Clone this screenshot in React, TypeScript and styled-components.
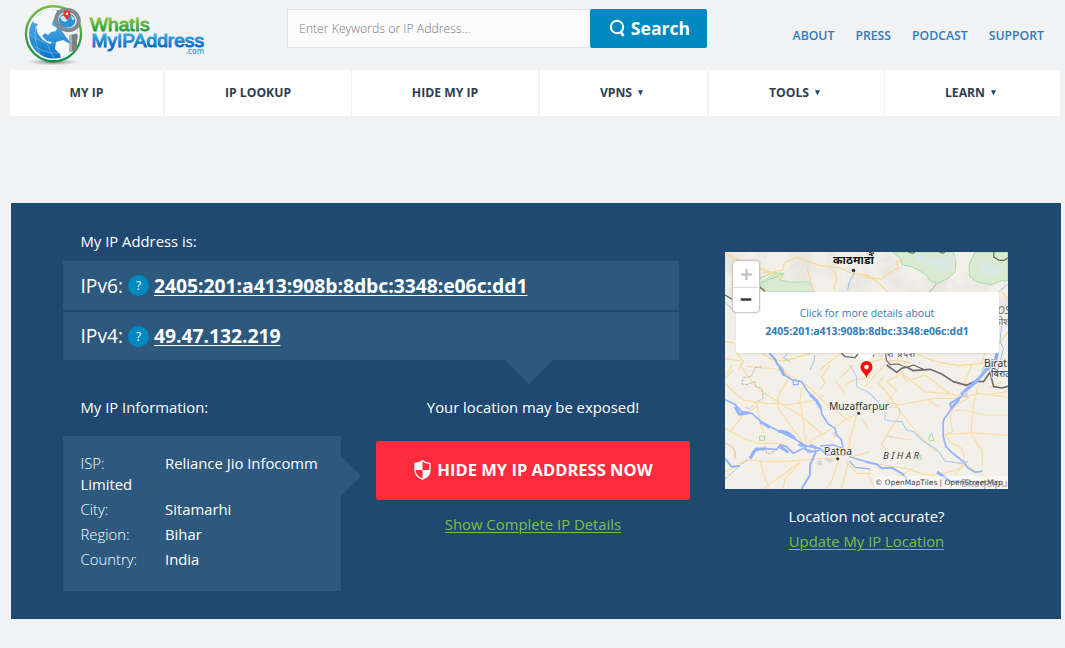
import React from 'react';
import styled, { createGlobalStyle } from 'styled-components';

const Global = createGlobalStyle`
  * { box-sizing: border-box; }
  body { margin: 0; background: #f1f2f4; font-family: 'Open Sans', 'Noto Sans', sans-serif; }
  a { color: inherit; }
`;

const Page = styled.div`
  width: 1065px;
  height: 648px;
  overflow: hidden;
`;
const Header = styled.header`
  display: flex;
  align-items: flex-start;
  height: 70px;
`;
const LogoLink = styled.div`
  width: 287px;
  height: 70px;
  svg { display: block; }
`;
const SearchForm = styled.form`
  display: flex;
  width: 420px;
  height: 39px;
  margin-top: 9px;
`;
const SearchInput = styled.input`
  flex: 1;
  min-width: 0;
  padding: 0 11px;
  border: 1px solid #e2e3e5;
  border-right: 0;
  background: #fcfcfc;
  font: 300 12.25px 'Open Sans', sans-serif;
  color: #777;
  outline: none;
  &::placeholder { color: #777; opacity: 1; }
`;
const SearchButton = styled.button`
  display: flex;
  align-items: center;
  justify-content: center;
  gap: 5px;
  width: 117px;
  border: 0;
  border-radius: 2px;
  padding: 0 0 1px 2px;
  background: #0088c1;
  color: #fff;
  font: 700 17.6px 'Open Sans', sans-serif;
`;
const TopLinks = styled.nav`
  display: flex;
  flex: 1;
  justify-content: flex-end;
  gap: 21px;
  padding: 27px 21px 0 0;
  font-size: 12.25px;
  font-weight: 600;
  line-height: 17px;
  color: #337ab7;
`;
const MainNav = styled.nav`
  display: grid;
  grid-template-columns: 155px 187px 188px 169px 176px 175px;
  width: 1050px;
  height: 46px;
  margin-left: 10px;
`;
const NavItem = styled.div<{ $gap: number; $menu?: boolean }>`
  display: flex;
  align-items: center;
  justify-content: center;
  gap: 6px;
  padding: 0 ${(p) => (p.$menu ? 4 : 0)}px 2px 0;
  background: #fff;
  border-right: ${(p) => p.$gap}px solid #f1f2f4;
  color: #2d3e50;
  font-size: 12.2px;
  font-weight: 700;
`;
const CaretSvg = styled.svg`
  display: block;
  margin-top: 2px;
`;
const Panel = styled.main`
  display: flex;
  width: 1050px;
  height: 416px;
  margin: 87px 0 0 11px;
  padding: 28px 0 0 52px;
  background: #1f4971;
  color: #fff;
  font-size: 14.85px;
`;
const Left = styled.section`
  width: 662px;
`;
const Label = styled.div`
  height: 30px;
  padding-left: 17.5px;
  line-height: 21px;
`;
const IpRow = styled.div<{ $h: number }>`
  display: flex;
  align-items: center;
  width: 616px;
  height: ${(p) => p.$h}px;
  margin-bottom: 2px;
  padding: 0 0 1px 17.5px;
  background: #2d597f;
  font-size: 19.2px;
`;
const IpName = styled.span`
  width: 47.5px;
  white-space: nowrap;
`;
const Help = styled.span`
  display: flex;
  align-items: center;
  justify-content: center;
  width: 21px;
  height: 21px;
  margin: 1px 5px 0 0;
  border-radius: 50%;
  background: #0088c1;
  font-size: 12px;
`;
const IpLink = styled.a`
  font-size: 19.4px;
  font-weight: 700;
  letter-spacing: -0.07px;
  text-decoration: underline;
  text-decoration-thickness: 1px;
  text-underline-offset: 2px;
`;
const DownArrow = styled.div`
  width: 0;
  margin: -2px 0 0 442px;
  border: 24px solid transparent;
  border-top-color: #2d597f;
  border-bottom: 0;
`;
const Lower = styled.div`
  display: flex;
  margin-top: 13px;
`;
const InfoColumn = styled.div`
  width: 313px;
`;
const InfoLabel = styled(Label)`
  height: 39px;
`;
const InfoWrap = styled.div`
  display: flex;
  align-items: flex-start;
`;
const InfoBox = styled.div`
  width: 278px;
  height: 155px;
  padding: 17px 17.5px 0;
  background: #2d597f;
`;
const RightArrow = styled.div`
  margin-top: 20px;
  border: 20px solid transparent;
  border-left-color: #2d597f;
  border-right: 0;
`;
const InfoLine = styled.div`
  margin-bottom: 4px;
  line-height: 21px;
`;
const InfoKey = styled.span`
  display: inline-block;
  width: 84.5px;
  height: 21px;
  vertical-align: top;
  font-weight: 300;
`;
const Cta = styled.div`
  display: flex;
  flex-direction: column;
  align-items: center;
  width: 314px;
  line-height: 21px;
`;
const CtaButton = styled.button`
  display: flex;
  align-items: center;
  justify-content: center;
  gap: 6px;
  width: 314px;
  height: 59px;
  margin: 23px 0 14px;
  padding: 0 0 2px 1px;
  border: 0;
  border-radius: 3px;
  background: #ff2a3b;
  color: #fff;
  font: 700 16.55px 'Open Sans', sans-serif;
`;
const GreenLink = styled.a`
  color: #7ac143;
  text-decoration: underline;
  text-underline-offset: 2px;
  text-decoration-thickness: 1px;
`;
const MapColumn = styled.aside`
  display: flex;
  flex-direction: column;
  align-items: center;
  width: 283px;
  padding-top: 21px;
  line-height: 25px;
`;
const MapFrame = styled.div`
  position: relative;
  width: 283px;
  height: 237px;
  margin-bottom: 15px;
  overflow: hidden;
  > svg { display: block; }
`;
const Popup = styled.div`
  position: absolute;
  left: 10.5px;
  top: 40px;
  width: 263px;
  height: 61px;
  padding: 12px 0 0 0;
  border-radius: 3px;
  background: #fff;
  box-shadow: 0 1px 2px rgba(0, 0, 0, 0.1);
  color: #337ab7;
  font-size: 10.5px;
  line-height: 18px;
  text-align: center;
`;
const Zoom = styled.div`
  position: absolute;
  left: 7px;
  top: 8px;
  display: grid;
  grid-template-rows: 26px 25px;
  width: 28px;
  border: 1px solid #c9c9c7;
  border-radius: 4px;
  background: #fff;
  box-shadow: 0 0 0 1px rgba(0, 0, 0, 0.06);
  > svg { display: block; margin: auto; }
  > :last-child { width: 100%; border-top: 1px solid #ddd; }
`;
const Credit = styled.div`
  position: absolute;
  right: 0;
  bottom: 0;
  width: 134px;
  height: 13px;
  padding-left: 1px;
  background: rgba(255, 255, 255, 0.5);
  color: #444;
  font: 7.45px/13px 'DejaVu Sans', sans-serif;
`;

const Logo = () => (
  <svg width="220" height="70" viewBox="0 0 220 70">
    <defs>
      <linearGradient id="ring" x2="0" y2="1"><stop stopColor="#79bd3f" /><stop offset="1" stopColor="#079348" /></linearGradient>
      <linearGradient id="sea" x2="0" y2="1"><stop stopColor="#63bdf0" /><stop offset="1" stopColor="#0873c5" /></linearGradient>
      <linearGradient id="green" x2="0" y2="1"><stop offset=".2" stopColor="#87c540" /><stop offset=".8" stopColor="#229943" /></linearGradient>
      <linearGradient id="blue" x2="0" y2="1"><stop offset=".2" stopColor="#3caae4" /><stop offset=".8" stopColor="#0869c4" /></linearGradient>
      <radialGradient id="shade"><stop stopColor="#555" stopOpacity=".8" /><stop offset="1" stopColor="#888" stopOpacity="0" /></radialGradient>
      <clipPath id="globe"><circle cx="53.5" cy="34" r="24.5" /></clipPath>
    </defs>
    <ellipse cx="53" cy="62" rx="26" ry="3.5" fill="url(#shade)" />
    <circle cx="53.5" cy="33.8" r="27.5" fill="#fff" stroke="url(#ring)" strokeWidth="2.4" />
    <circle cx="53.5" cy="34" r="24.5" fill="url(#sea)" />
    <g clipPath="url(#globe)">
      <path fill="#f5f9fc" d="M33 20L38 15L46 10L56 9L58 17L53 20L52 25L57 28L56 31L51 32L48 35L45 33L42 36L47 41L52 42L50 44L43 40L38 34L36 27L38 24L34 23Z M56 42L63 40L72 45L78 50L70 60L62 62L60 54L55 49Z M53 14L66 10L80 30L72 45L66 37L60 28Z" />
      <path fill="none" stroke="#9bd0f0" strokeWidth=".5" d="M29 34Q42 44 55 43M30 44Q44 54 60 53M36 26Q32 40 43 60M47 41Q48 50 56 60" />
    </g>
    <path d="M69.5 35L77 33.5V50L69.5 52Z" fill="#7c8083" />
    <path d="M69.5 35L72 34.5V51.3L69.5 52Z" fill="#a9adaf" />
    <ellipse cx="67.5" cy="20" rx="11.5" ry="10" transform="rotate(20 67.5 20)" fill="#d5e9f4" stroke="#85898c" strokeWidth="4" />
    <ellipse cx="67" cy="20.5" rx="8.3" ry="7.3" fill="#2b93d2" />
    <path d="M60 17L65 15L68 19L66 22L62 21ZM71 15L75 19L72 20Z" fill="#cae5f3" />
    <path d="M67 20C65 17 63.4 16 63.4 13.8A3.6 3.6 0 0 1 70.6 13.8C70.6 16 68 18 67 20Z" fill="#e7312b" />
    <circle cx="67" cy="13.7" r="1.3" fill="#fff" />
    <text x="90" y="31.3" fontFamily="Liberation Sans, sans-serif" fontSize="19" fill="url(#green)" stroke="url(#green)" strokeWidth="1" textLength="59.5" lengthAdjust="spacingAndGlyphs">WhatIs</text>
    <text x="91.5" y="46.8" fontFamily="Liberation Sans, sans-serif" fontSize="18.5" fill="url(#blue)" stroke="url(#blue)" strokeWidth="1" textLength="112.5" lengthAdjust="spacingAndGlyphs">MyIPAddress</text>
    <text x="186" y="54" fontFamily="Open Sans, sans-serif" fontWeight="600" fontSize="8.5" fill="#3b95d3" textLength="18" lengthAdjust="spacingAndGlyphs">.com</text>
  </svg>
);

const SearchIcon = () => (
  <svg width="17" height="18" viewBox="0 0 17 18" fill="none" stroke="#fff">
    <circle cx="8" cy="8" r="6.2" strokeWidth="2" />
    <path d="M11.5 12.5L14.5 17" strokeWidth="2.6" />
  </svg>
);

const ShieldIcon = () => (
  <svg width="17" height="20" viewBox="0 0 17 20">
    <path d="M8.5 .8C6.5 2.5 4 3.2 1 3.4V10C1 14.5 4 17.5 8.5 19.2C13 17.5 16 14.5 16 10V3.4C13 3.2 10.5 2.5 8.5 .8Z" fill="none" stroke="#fff" strokeWidth="1.3" />
    <path d="M8.5 .8V10H1V3.4C4 3.2 6.5 2.5 8.5 .8ZM8.5 10H16C16 14.5 13 17.5 8.5 19.2Z" fill="#fff" />
  </svg>
);

const Caret = () => (
  <CaretSvg width="5" height="6" viewBox="0 0 5 6"><path d="M0 0.3H5L2.5 5.6Z" fill="#1f4971" /></CaretSvg>
);

const MapArt = () => (
  <svg width="283" height="237" viewBox="0 0 283 237" fontFamily="'Noto Sans', sans-serif">
    <defs>
      <filter id="relief" x="0" y="0" width="100%" height="100%">
        <feTurbulence type="fractalNoise" baseFrequency=".045" numOctaves="3" seed="4" />
        <feColorMatrix values="0 0 0 0 .5  0 0 0 0 .5  0 0 0 0 .48  .9 0 0 0 -.32" />
      </filter>
    </defs>
    <rect width="283" height="237" fill="#f3f0e9" />
    <rect width="283" height="55" filter="url(#relief)" opacity=".6" />
    {/* north-west */}
    <g transform="translate(-5 -7) scale(.33333)" fill="none" strokeLinejoin="round">
      <path d="M118 115L150 95L165 85L190 88L180 105L215 112L265 110L285 141L135 141Z" fill="#d9e8d0" stroke="#7fd68a" strokeWidth="2" strokeDasharray="6 2" />
      <path d="M120 100L158 83L192 85M125 115L150 102L180 92" stroke="#7fd68a" strokeWidth="2" />
      <path d="M15 25L60 48L120 70L152 82L188 75L194 53L230 36L262 48L300 62L360 68L395 85L450 92M125 80L170 88L193 100M345 78L350 100L342 135M262 70L270 105L280 138M15 290L43 294M125 325L160 345L200 347L270 325M365 325L330 350L300 375M50 325L70 347L55 375M15 340L60 348" stroke="#fad78f" strokeWidth="3.5" />
      <path d="M383 136L388 110L400 90L405 72M205 325L190 338L210 350M285 330L282 350L270 375M15 170L45 202" stroke="#9dc1ea" strokeWidth="3" />
      <path d="M148 325L165 342L172 358L192 375" stroke="#84a9fb" strokeWidth="6" />
      <path d="M15 150L42 166L60 186M118 125L135 139M365 325L375 335L405 338L415 325" stroke="#666" strokeWidth="4" />
    </g>
    {/* north-east */}
    <g transform="translate(140 -7) scale(.33333)" fill="none" strokeLinejoin="round">
      <path d="M82 21L105 38L112 60L140 65L160 75L184 90L195 106L215 115L248 101L270 82L273 55L265 21Z" fill="#dce9d1" stroke="#83da8c" strokeWidth="2.5" strokeDasharray="9 2" />
      <path d="M330 21L312 60L314 95L340 112L380 119L410 107L429 108V21Z" fill="#dce9d1" stroke="#83da8c" strokeWidth="2.5" strokeDasharray="9 2" />
      <path d="M150 21L205 45L275 30L260 75L220 80L190 55L152 51ZM340 45L380 60L425 75L395 90L345 92Z" fill="#d9e9e4" />
      <path d="M0 97L50 102L70 85L100 70L95 50L120 40M0 92L30 105L68 140M410 140L429 165M399 300L429 260M150 325L205 348L280 362L350 355L360 325M0 355L55 342M60 350L100 345L140 355" stroke="#fad78f" strokeWidth="3.5" />
      <path d="M400 140L429 118M410 240L405 290L415 310L400 375" stroke="#9dc1ea" strokeWidth="3" />
      <path d="M215 115L205 130L192 141" stroke="#aaa" strokeWidth="3" />
      <path d="M387 21L386 36L402 46L418 46L429 38M130 21L143 25L150 21M223 21L233 25L240 21M62 325L64 345L75 359L100 357L125 368L145 360L180 375" stroke="#666" strokeWidth="3.5" />
      <path d="M397 324L392 344L378 359L365 375" stroke="#84a9fb" strokeWidth="10" />
    </g>
    {/* south-west */}
    <g transform="translate(-5 113) scale(.33333)" fill="none" strokeLinejoin="round">
      <path d="M35 0L25 20L15 27M40 15L15 40M60 0L112 70L180 115L240 150L310 210M80 4L170 12L200 25L260 60L320 118L390 170M15 55L40 80L72 106L140 115L210 118L290 105L310 90M180 0L210 35L190 65L173 95L175 130L210 180L250 235M245 70L240 110L250 170L258 238M110 125L70 150L55 170L30 200M15 190L80 225L118 235L175 235L200 240M132 205L120 175L110 110M330 0L305 35L315 55L300 75M345 45L375 85M375 60L400 45L450 38M360 40L400 0M262 235L300 210L350 183L380 162L410 147M15 320L50 300L85 283L130 290L190 290L310 280L355 280M240 290L225 310L195 340L190 371M120 290L135 340L150 371M240 290L180 335L130 371M355 285L345 320L335 350L320 371M385 290L375 330L365 371M380 290L410 325L450 325M388 278L450 260M410 150L390 220L385 262M425 160L445 190" stroke="#f9dca5" strokeWidth="3.6" />
      <path d="M15 234L35 244L45 260L45 280" stroke="#f4b477" strokeWidth="3" />
      <path d="M125 5L105 8L94 35L70 37L65 55L75 60L105 50L108 65L125 70L130 100L110 110L90 130L75 128M15 342L35 325L60 300L85 284M135 243L140 265L155 267L165 250" stroke="#bdbab3" strokeWidth="3" strokeDasharray="10 3" />
      <path d="M175 0L190 27L215 44L245 50L262 78L290 108L302 125L305 147L325 177L345 190L350 210L363 222L369 245M15 104L45 118L65 140L95 145L130 175L180 200L225 222L255 242L300 250L320 270L380 270M90 280L100 258L130 250L170 254L180 240L200 245L220 265L250 250L280 260L300 255" stroke="#94b2ff" strokeWidth="5" />
      <path d="M180 8L193 32M270 88L290 108L302 130M45 125L58 148L85 143M120 170L150 187M175 198L200 202L225 220M90 280L108 252L135 252M180 245L205 262M235 238L260 245M270 240L290 250" stroke="#94b2ff" strokeWidth="9" />
      <path d="M220 46L220 59L235 59L233 45M250 248L265 262L285 258M300 243L340 240L370 250M388 275L420 285L450 292M388 288L405 307L450 312" stroke="#94b2ff" strokeWidth="4" />
      <path d="M288 260L270 300L270 330L245 371M15 281L35 305L60 303" stroke="#94b2ff" strokeWidth="6" />
      <path d="M390 0L410 35L410 65L435 78" stroke="#a9cdf0" strokeWidth="3" />
      <path d="M119 213H134V226H119Z" stroke="#9ed698" strokeWidth="3" />
      <path d="M290 290L305 285L308 300L295 302ZM310 280L345 285L330 295ZM338 205L345 200L350 210L345 217Z" fill="#d6d3d0" />
      <circle cx="416" cy="145" r="4.5" fill="#333" /><circle cx="353" cy="281" r="4.5" fill="#333" />
    </g>
    {/* south-east */}
    <g transform="translate(140 113) scale(.33333)" fill="none" strokeLinejoin="round">
      <path d="M55 35L40 55L60 75L85 110L105 138L145 190L180 230L210 260M110 25L65 50L95 75L65 112L100 120L210 100L280 100L340 85L429 97M110 25L125 50L180 30L260 90M115 0L110 25L180 80L260 88L285 92M0 135L100 125L105 150L65 210L50 240L80 275M255 135L310 138L360 150L429 150M320 0L300 50L310 100L265 125L255 160L262 200L240 210M340 60L325 120L318 205L340 240L352 260L352 305M235 210L318 203L380 207L429 211M240 210L260 235L290 250L300 290L270 330M0 290L55 300L120 310L170 325L200 330L260 320L300 300M145 310L100 335L85 371M20 310L10 330L30 371M0 65L35 25L60 0M190 105L222 126M370 70L410 50M429 80L360 90M70 215L140 225M310 305L380 345M200 330L230 371" stroke="#f9dca5" strokeWidth="3.5" />
      <path d="M65 0L95 22L110 10L125 6L145 17L195 13L230 27L265 50L305 61L330 49L355 50L375 22L386 65L410 69L429 64" stroke="#6f6c68" strokeWidth="5" />
      <path d="M373 0L352 25L335 52L300 80L285 98L265 120L250 145L238 160L234 175L235 215L243 245L258 260L270 270L295 290L310 310L330 322L352 318" stroke="#94b2ff" strokeWidth="5" />
      <path d="M370 5L350 32L320 60L288 88" stroke="#94b2ff" strokeWidth="9" />
      <path d="M288 95L255 116L260 130L284 103M0 290L35 298L50 310L80 308L110 325L125 340" stroke="#94b2ff" strokeWidth="6" />
      <path d="M0 75L20 90L40 112L60 135L60 165L80 168L110 170L125 195L145 200L170 225L210 250L225 265L240 288L290 295L310 290" stroke="#a9cdf0" strokeWidth="3.5" />
      <path d="M200 205L190 220L195 229L207 225L200 205M165 270L157 285L170 282Z M360 0L350 20" stroke="#9ed698" strokeWidth="3" />
      <path d="M98 127L107 135L103 145ZM65 210L88 215L75 219ZM300 80L312 100L290 95Z" fill="#d6d3d0" />
    </g>
    <path d="M212 220L226 230L240 229L249 235" stroke="#94b2ff" strokeWidth="3" fill="none" />
    <g fill="#333" stroke="#f6f3ee" strokeWidth="1.5" paintOrder="stroke">
      <text x="108" y="12" fontSize="11.5" fontWeight="700" fill="#111" textLength="41">काठमाडौं</text>
      <text x="104" y="158" fontSize="10.3" textLength="60">Muzaffarpur</text>
      <text x="99" y="203" fontSize="10.3" textLength="28">Patna</text>
      <text x="158" y="207" fontSize="9.5" fontStyle="italic" textLength="36">BIHAR</text>
      <text x="259" y="114.5" fontSize="10.3">Biratnagar</text>
      <text x="266" y="125" fontSize="9.5">बिराटनगर</text>
      <text x="135" y="105" fontSize="9" fill="#555" textLength="55">म ध े श प्रदेश</text>
      <text x="267" y="62" fontSize="10" fontStyle="italic" fill="#666">KOSHI</text>
      <text x="268" y="73" fontSize="10" fill="#666">कोशी</text>
      <text x="236" y="235" fontSize="10.3" fill="#444">Bhagalpur</text>
    </g>
    <circle cx="128.5" cy="18.5" r="1.8" fill="#333" />
    <path d="M132 101H150L141 111Z" fill="#fff" />
    <path d="M141.5 126C140 121 135.5 119.5 135.5 115A6 6 0 0 1 147.5 115C147.5 119.5 143 121 141.5 126Z" fill="#f80d0d" />
    <circle cx="141.5" cy="115" r="2.3" fill="#fff" />
  </svg>
);

const navItems = [
  { label: 'MY IP', gap: 2 },
  { label: 'IP LOOKUP', gap: 1 },
  { label: 'HIDE MY IP', gap: 2 },
  { label: 'VPNS', gap: 2, menu: true },
  { label: 'TOOLS', gap: 1, menu: true },
  { label: 'LEARN', gap: 0, menu: true },
];
const details = [
  ['ISP:', 'Reliance Jio Infocomm Limited'],
  ['City:', 'Sitamarhi'],
  ['Region:', 'Bihar'],
  ['Country:', 'India'],
];

export default function App() {
  return (
    <Page>
      <Global />
      <Header>
        <LogoLink><Logo /></LogoLink>
        <SearchForm>
          <SearchInput placeholder="Enter Keywords or IP Address..." />
          <SearchButton type="button"><SearchIcon />Search</SearchButton>
        </SearchForm>
        <TopLinks>
          <span>ABOUT</span><span>PRESS</span><span>PODCAST</span><span>SUPPORT</span>
        </TopLinks>
      </Header>
      <MainNav>
        {navItems.map((n) => (
          <NavItem key={n.label} $gap={n.gap} $menu={n.menu}>{n.label}{n.menu && <Caret />}</NavItem>
        ))}
      </MainNav>
      <Panel>
        <Left>
          <Label>My IP Address is:</Label>
          <IpRow $h={49}><IpName>IPv6:</IpName><Help>?</Help><IpLink>2405:201:a413:908b:8dbc:3348:e06c:dd1</IpLink></IpRow>
          <IpRow $h={48}><IpName>IPv4:</IpName><Help>?</Help><IpLink>49.47.132.219</IpLink></IpRow>
          <DownArrow />
          <Lower>
            <InfoColumn>
              <InfoLabel>My IP Information:</InfoLabel>
              <InfoWrap>
                <InfoBox>
                  {details.map(([k, v]) => <InfoLine key={k}><InfoKey>{k}</InfoKey>{v}</InfoLine>)}
                </InfoBox>
                <RightArrow />
              </InfoWrap>
            </InfoColumn>
            <Cta>
              <span>Your location may be exposed!</span>
              <CtaButton><ShieldIcon />HIDE MY IP ADDRESS NOW</CtaButton>
              <GreenLink>Show Complete IP Details</GreenLink>
            </Cta>
          </Lower>
        </Left>
        <MapColumn>
          <MapFrame>
            <MapArt />
            <Popup>Click for more details about<br /><b>2405:201:a413:908b:8dbc:3348:e06c:dd1</b></Popup>
            <Zoom>
              <svg width="11" height="11"><path d="M5.5 0V11M0 5.5H11" stroke="#bbb" strokeWidth="2" /></svg>
              <svg width="25" height="25" viewBox="0 0 25 25"><path d="M7 12H18" stroke="#333" strokeWidth="2.5" /></svg>
            </Zoom>
            <Credit>© OpenMapTiles | OpenStreetMap</Credit>
          </MapFrame>
          <span>Location not accurate?</span>
          <GreenLink>Update My IP Location</GreenLink>
        </MapColumn>
      </Panel>
    </Page>
  );
}
